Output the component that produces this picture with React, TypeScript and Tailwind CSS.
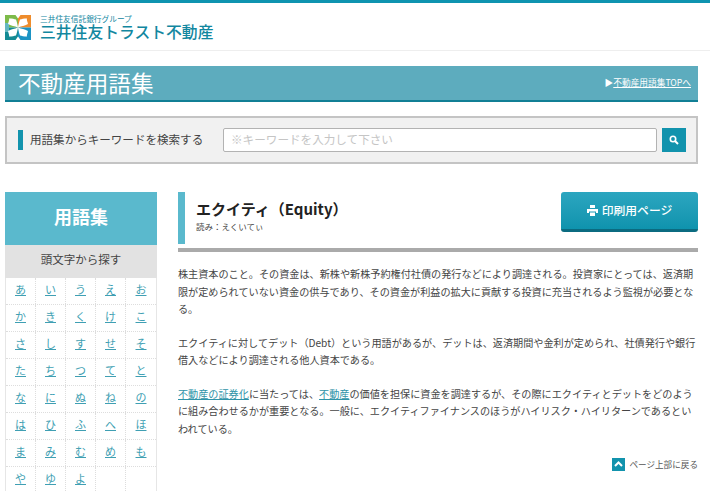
const kana = [
  ["あ", "い", "う", "え", "お"],
  ["か", "き", "く", "け", "こ"],
  ["さ", "し", "す", "せ", "そ"],
  ["た", "ち", "つ", "て", "と"],
  ["な", "に", "ぬ", "ね", "の"],
  ["は", "ひ", "ふ", "へ", "ほ"],
  ["ま", "み", "む", "め", "も"],
  ["や", "ゆ", "よ", "", ""],
];

function Logo() {
  return (
    <svg width="26" height="25" viewBox="0 0 26 25">
      <rect x="0" y="0" width="13" height="12.5" fill="#7dbb4a" />
      <rect x="13" y="0" width="13" height="12.5" fill="#ee8c2c" />
      <rect x="0" y="12.5" width="13" height="12.5" fill="#138a94" />
      <rect x="13" y="12.5" width="13" height="12.5" fill="#1b93c4" />
      <rect x="0" y="8" width="4" height="9" fill="#63b7c0" />
      <path d="M10.5 0L13 3.5 15.5 0zM10.5 25L13 21.5 15.5 25z" fill="white" />
      <path d="M13 12.5C9 11 7 11 3 9 3.5 6.5 4.5 5 4 3.5 7 3.5 9.5 4 11 4.5 12 7 12.5 10 13 12.5z" fill="white" />
      <path d="M13 12.5C17 11 19 11 23 9 22.5 6.5 21.5 5 22 3.5 19 3.5 16.5 4 15 4.5 14 7 13.5 10 13 12.5z" fill="white" />
      <path d="M13 12.5C9 14 7 14 3 16 3.5 18.5 4.5 20 4 21.5 7 21.5 9.5 21 11 20.5 12 18 12.5 15 13 12.5z" fill="white" />
      <path d="M13 12.5C17 14 19 14 23 16 22.5 18.5 21.5 20 22 21.5 19 21.5 16.5 21 15 20.5 14 18 13.5 15 13 12.5z" fill="white" />
    </svg>
  );
}

export default function App() {
  return (
    <div className="h-[491px] w-[710px] overflow-hidden bg-white text-[#333] font-['Noto_Sans_CJK_JP','Noto_Sans',sans-serif]">
      <header className="h-[51px] border-t-[3px] border-b border-[#0e94b0] border-b-[#eeeeee]">
        <div className="flex items-center gap-[9px] pl-[5px] pt-[11px]">
          <Logo />
          <div className="flex flex-col text-[#12879f]">
            <span className="text-[7.7px] leading-[9px]">三井住友信託銀行グループ</span>
            <span className="text-[15.8px] leading-[18px] font-medium">三井住友トラスト不動産</span>
          </div>
        </div>
      </header>

      <div className="mx-[5px] mt-[15px] w-[693px]">
        <div className="flex h-[36px] items-center justify-between border-b-2 border-[#117f95] bg-[#5dacbe] pl-[13px] pr-[7px]">
          <h1 className="text-[22.6px] leading-none font-normal text-white">不動産用語集</h1>
          <a className="text-[8.7px] text-white">
            ▶<span className="underline">不動産用語集TOPへ</span>
          </a>
        </div>

        <div className="mt-[14px] flex h-[48px] items-center border-2 border-[#c4c4c4] bg-[#f1f1f1] pl-[11px]">
          <span className="h-[20px] w-[5px] bg-[#1293ad]" />
          <span className="ml-[7px] w-[193px] pb-[1px] text-[11.55px] text-[#444]">用語集からキーワードを検索する</span>
          <div className="flex h-[24px] w-[434px] items-center rounded-[2px] border border-[#b3b3b3] bg-white pb-[1px] pl-[7px] text-[11.6px] text-[#c5c5c5]">
            ※キーワードを入力して下さい
          </div>
          <button className="ml-[5px] flex h-[24px] w-[24px] items-center justify-center bg-[#1293ad]">
            <svg width="10" height="10" viewBox="0 0 10 10" fill="none" stroke="white">
              <circle cx="4" cy="4" r="2.7" strokeWidth="1.6" />
              <path d="M6 6l3 3" strokeWidth="2" />
            </svg>
          </button>
        </div>

        <div className="mt-[28px] flex gap-[21px]">
          <aside className="w-[152px] shrink-0">
            <div className="flex h-[53px] items-center justify-center bg-[#5ab9cd] pb-[5px] text-[18px] font-bold text-white">
              用語集
            </div>
            <div className="flex h-[33px] items-center justify-center bg-[#e2e2e2] pb-[3px] text-[11.5px] text-[#444]">
              頭文字から探す
            </div>
            <div className="border-x border-[#e6e6e6]">
              {kana.map((row, i) => (
                <div key={i} className="grid h-[27px] grid-cols-5 border-b border-dotted border-[#dddddd]">
                  {row.map((k, j) => (
                    <div
                      key={j}
                      className="flex items-center justify-center border-r border-dotted border-[#dddddd] pb-[3px] text-[11px] text-[#3f9fb3] underline last:border-r-0"
                    >
                      {k}
                    </div>
                  ))}
                </div>
              ))}
            </div>
          </aside>

          <main className="w-[520px]">
            <div className="flex h-[52px] items-start justify-between">
              <div className="flex h-[52px] border-l-[7px] border-[#5ab9cd] pl-[11px]">
                <div>
                  <h2 className="mt-[6px] text-[15px] leading-[22px] font-bold text-[#222]">エクイティ（Equity）</h2>
                  <p className="text-[8.5px] leading-[12px] text-[#444]">読み：えくいてぃ</p>
                </div>
              </div>
              <button className="flex h-[40px] w-[137px] items-center justify-center gap-[4px] rounded-[3px] border-b-[3px] border-[#0b6b80] bg-gradient-to-b from-[#2ba6c0] to-[#0e93ad] pb-[1px] text-[11.8px] font-medium text-white">
                <svg width="11" height="11" viewBox="0 0 11 11" fill="white">
                  <path d="M3 0h5v3H3zM0 4h11v4H9V6.5H2V8H0zM3 7.5h5V11H3z" />
                </svg>
                印刷用ページ
              </button>
            </div>
            <div className="mt-[4px] h-[4px] bg-[#aaaaaa]" />

            <div className="mt-[13px] text-[10.15px] leading-[17.7px] text-[#444]">
              <p>
                株主資本のこと。その資金は、新株や新株予約権付社債の発行などにより調達される。投資家にとっては、返済期限が定められていない資金の供与であり、その資金が利益の拡大に貢献する投資に充当されるよう監視が必要となる。
              </p>
              <p className="mt-[15.5px]">
                エクイティに対してデット（Debt）という用語があるが、デットは、返済期間や金利が定められ、社債発行や銀行借入などにより調達される他人資本である。
              </p>
              <p className="mt-[15.5px]">
                <a className="text-[#2f93a8] underline">不動産の証券化</a>に当たっては、
                <a className="text-[#2f93a8] underline">不動産</a>
                の価値を担保に資金を調達するが、その際にエクイティとデットをどのように組み合わせるかが重要となる。一般に、エクイティファイナンスのほうがハイリスク・ハイリターンであるといわれている。
              </p>
            </div>

            <div className="mt-[20px] flex items-center justify-end gap-[4px] text-[8.6px] text-[#555]">
              <span className="flex h-[13px] w-[13px] items-center justify-center bg-[#1293ad]">
                <svg width="9" height="6" viewBox="0 0 9 6" fill="none" stroke="white" strokeWidth="2">
                  <path d="M1 5l3.5-3.5L8 5" />
                </svg>
              </span>
              ページ上部に戻る
            </div>
          </main>
        </div>
      </div>
    </div>
  );
}
